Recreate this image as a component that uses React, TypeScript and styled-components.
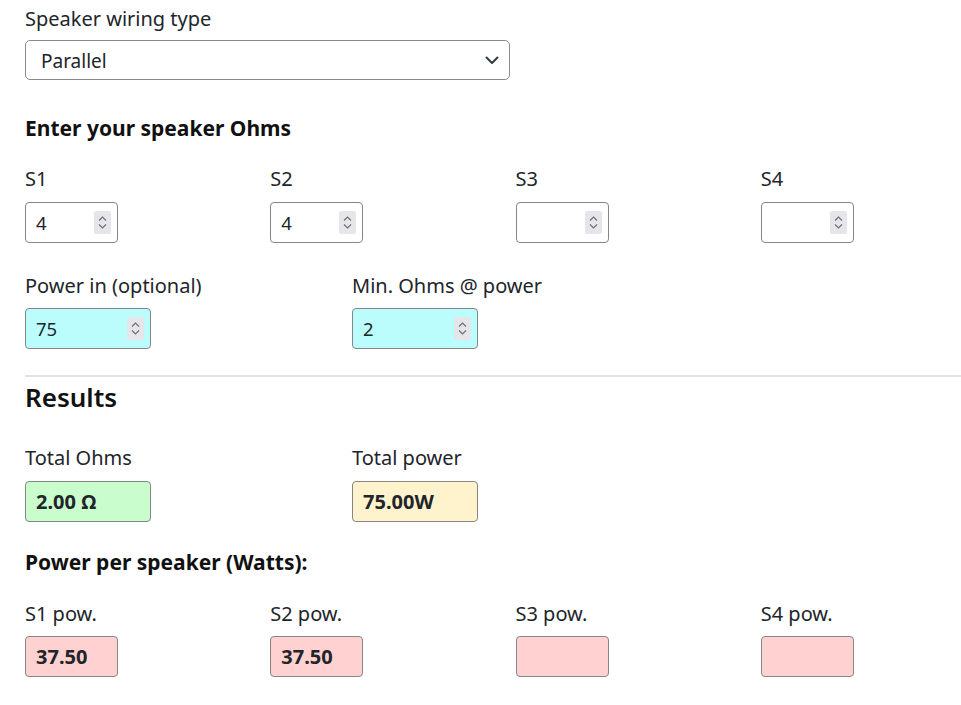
import React from "react";
import styled, { createGlobalStyle } from "styled-components";

const Global = createGlobalStyle`
  html, body { margin: 0; padding: 0; background: #fff; overflow: hidden; }
  body {
    font-family: "Noto Sans", "Open Sans", sans-serif;
    color: #212529;
    width: 961px;
    height: 705px;
  }
  * { box-sizing: border-box; }
`;

const Page = styled.div`
  width: 1006px;
  padding: 4px 0 0 25px;
`;

const Label = styled.label<{ $gap?: number }>`
  display: block;
  font-size: 20px;
  line-height: 30px;
  margin-bottom: ${(p) => p.$gap ?? 7}px;
  white-space: nowrap;
`;

const SelectBox = styled.div`
  width: 485px;
  height: 40px;
  border: 1px solid #8a8a8a;
  border-radius: 5px;
  display: flex;
  align-items: center;
  justify-content: space-between;
  padding: 1px 10px 0 15px;
  font-size: 19px;
`;

const Heading = styled.h5<{ $top: number; $bottom: number }>`
  margin: ${(p) => p.$top}px 0 ${(p) => p.$bottom}px;
  font-size: 21px;
  font-weight: 700;
  line-height: 30px;
  color: #111;
`;

const Results = styled.h3`
  margin: 4px 0 30px;
  font-size: 26px;
  font-weight: 600;
  line-height: 32px;
  color: #111;
`;

const Row = styled.div<{ $cols: number; $mb: number }>`
  display: grid;
  grid-template-columns: repeat(${(p) => p.$cols}, 1fr);
  width: 981px;
  margin-bottom: ${(p) => p.$mb}px;
`;

const Col = styled.div``;

const Field = styled.div<{ $w: number; $bg: string }>`
  width: ${(p) => p.$w}px;
  height: 41px;
  border: 1px solid #868686;
  border-radius: 4px;
  background: ${(p) => p.$bg};
  display: flex;
  align-items: center;
  padding: 0 6px 0 10px;
`;

const Value = styled.span<{ $bold?: boolean }>`
  flex: 1;
  font-size: ${(p) => (p.$bold ? 20 : 18.5)}px;
  font-weight: ${(p) => (p.$bold ? 700 : 400)};
  color: #212529;
`;

const Spinner = styled.div`
  width: 17px;
  height: 23px;
  background: #e6e6ea;
  border-radius: 2px;
  display: flex;
  align-items: center;
  justify-content: center;
`;

const Rule = styled.hr`
  border: none;
  border-top: 2px solid #e3e3e3;
  margin: 26px 0 0;
  width: 981px;
`;

const Spin = () => (
  <Spinner>
    <svg width="9" height="17" viewBox="0 0 9 17" fill="none" stroke="#6d6d6d" strokeWidth="1.1">
      <path d="M1 6.5 L4.5 3 L8 6.5" />
      <path d="M1 10.5 L4.5 14 L8 10.5" />
    </svg>
  </Spinner>
);

const NumberField = ({ value, w, bg }: { value: string; w: number; bg: string }) => (
  <Field $w={w} $bg={bg}>
    <Value>{value}</Value>
    <Spin />
  </Field>
);

const OutField = ({ value, w, bg }: { value: string; w: number; bg: string }) => (
  <Field $w={w} $bg={bg}>
    <Value $bold>{value}</Value>
  </Field>
);

export default function App() {
  const speakers = [
    { n: "S1", v: "4" },
    { n: "S2", v: "4" },
    { n: "S3", v: "" },
    { n: "S4", v: "" },
  ];
  const pow = [
    { n: "S1 pow.", v: "37.50" },
    { n: "S2 pow.", v: "37.50" },
    { n: "S3 pow.", v: "" },
    { n: "S4 pow.", v: "" },
  ];
  return (
    <Page>
      <Global />
      <Label $gap={6}>Speaker wiring type</Label>
      <SelectBox>
        <span>Parallel</span>
        <svg width="14" height="9" viewBox="0 0 14 9" fill="none" stroke="#343a40" strokeWidth="2" strokeLinecap="round" strokeLinejoin="round">
          <path d="M1.5 1.5 L7 7 L12.5 1.5" />
        </svg>
      </SelectBox>

      <Heading $top={33} $bottom={21}>Enter your speaker Ohms</Heading>
      <Row $cols={4} $mb={28}>
        {speakers.map((s) => (
          <Col key={s.n}>
            <Label $gap={8}>{s.n}</Label>
            <NumberField value={s.v} w={93} bg="#fff" />
          </Col>
        ))}
      </Row>

      <Row $cols={3} $mb={0}>
        <Col>
          <Label>Power in (optional)</Label>
          <NumberField value="75" w={126} bg="#bbfdfd" />
        </Col>
        <Col>
          <Label>Min. Ohms @ power</Label>
          <NumberField value="2" w={126} bg="#bbfdfd" />
        </Col>
      </Row>

      <Rule />
      <Results>Results</Results>

      <Row $cols={3} $mb={0}>
        <Col>
          <Label $gap={8}>Total Ohms</Label>
          <OutField value="2.00 Ω" w={126} bg="#c9fdcd" />
        </Col>
        <Col>
          <Label $gap={8}>Total power</Label>
          <OutField value="75.00W" w={126} bg="#fff3cd" />
        </Col>
      </Row>

      <Heading $top={25} $bottom={22}>Power per speaker (Watts):</Heading>
      <Row $cols={4} $mb={0}>
        {pow.map((s) => (
          <Col key={s.n}>
            <Label>{s.n}</Label>
            <OutField value={s.v} w={93} bg="#ffd1d1" />
          </Col>
        ))}
      </Row>
    </Page>
  );
}
